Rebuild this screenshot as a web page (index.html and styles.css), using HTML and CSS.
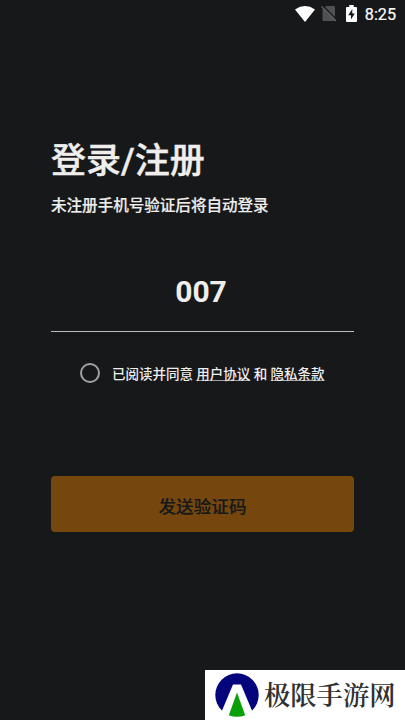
FILE: index.html
```
<!DOCTYPE html>
<html lang="zh-CN">
<head>
<meta charset="utf-8">
<title>登录/注册</title>
<link rel="stylesheet" href="styles.css">
</head>
<body>
<header class="status">
  <svg class="wifi" viewBox="0 0 20 16"><path d="M0 3.4Q10-3.4 20 3.4L10 16Z" fill="#fff"/></svg>
  <svg class="sim" viewBox="0 0 16 17"><path d="M5 1H13Q14 1 14 2V16H2.5Q1.5 16 1.5 15V4.5Z" fill="#505152"/><path d="M1.5 .5 16 15" stroke="#17181a" stroke-width="1.5"/><path d="M.5 1.5 15 16" stroke="#606162" stroke-width="1.2"/></svg>
  <svg class="battery" viewBox="0 0 11 17"><path d="M3.3 0H7.7V2H10Q11 2 11 3V16Q11 17 10 17H1Q0 17 0 16V3Q0 2 1 2H3.3Z" fill="#fff"/><path d="M6.3 4 2.2 10.2H5V14.6L8.8 8.5H6.3Z" fill="#17181a"/></svg>
  <time class="clock">8:25</time>
</header>
<main class="login">
  <h1 class="title">登录/注册</h1>
  <p class="hint">未注册手机号验证后将自动登录</p>
  <div class="phone">007</div>
  <div class="agreement">
    <span class="radio"></span>
    <span class="terms">已阅读并同意 <a class="link">用户协议</a> 和 <a class="link">隐私条款</a></span>
  </div>
  <button class="submit">发送验证码</button>
</main>
<footer class="brand">
  <svg class="logo" viewBox="0 0 44 44"><circle cx="22" cy="22" r="21.7" fill="#04047c"/><path d="M18 11.5H26L38 40V44H6V40Z" fill="#fff"/><path d="M22 19.5 30.2 42.2Q22 45.3 13.8 42.2Z" fill="#08a008"/></svg>
  <span class="brand-name">极限手游网</span>
</footer>
</body>
</html>
```
FILE: styles.css
```
* { box-sizing: border-box; }
body {
  margin: 0;
  height: 720px;
  display: flex;
  flex-direction: column;
  overflow: hidden;
  background: #17181a;
  color: #efeeec;
  font-family: Roboto, "Noto Sans CJK SC", sans-serif;
}
.status {
  height: 28px;
  display: flex;
  justify-content: flex-end;
  align-items: center;
  padding-right: 9px;
}
.wifi { width: 20px; height: 16px; margin-right: 6px; margin-top: -1px; }
.sim { width: 16px; height: 17px; margin-right: 9px; margin-top: -1px; }
.battery { width: 11px; height: 17px; margin-right: 8px; margin-top: -1px; }
.clock { color: #fff; font-size: 16.2px; font-weight: 400; line-height: 29px; -webkit-text-stroke: .2px; }
.login { flex: 1; padding: 109px 51px 0; }
.title { margin: 0; font-size: 35px; line-height: 50px; font-weight: 500; white-space: nowrap; -webkit-text-stroke: .4px; }
.hint { margin: 7px 0 0; font-size: 15.55px; line-height: 24px; font-weight: 500; white-space: nowrap; -webkit-text-stroke: .15px; }
.phone {
  height: 114px;
  padding: 54px 3px 0 0;
  border-bottom: 1.5px solid #bcbcbb;
  font-size: 30px;
  line-height: 40px;
  font-weight: 700;
  text-align: center;
}
.agreement {
  display: flex;
  align-items: center;
  height: 20px;
  margin: 31px 0 0 29px;
  gap: 12px;
  font-size: 13.5px;
  line-height: 20px;
  font-weight: 500;
  white-space: nowrap;
}
.terms { padding-top: 1px; }
.radio { width: 20px; height: 20px; border: 2px solid #a2a2a2; border-radius: 50%; }
.link { text-decoration: underline #a2a2a2 1px; text-underline-offset: 1px; text-decoration-skip-ink: none; }
.submit {
  display: block;
  width: 303px;
  height: 56px;
  margin: 93px 0 0;
  padding: 5px 0 0;
  border: 0;
  border-radius: 4px;
  background: #75470e;
  color: #17181a;
  font: 500 17.6px/24px Roboto, "Noto Sans CJK SC", sans-serif;
  -webkit-text-stroke: .15px;
}
.brand {
  align-self: flex-end;
  width: 200px;
  height: 50px;
  display: flex;
  align-items: center;
  padding-left: 10px;
  gap: 5px;
  background: #fff;
}
.logo { width: 44px; height: 44px; margin-top: -1px; }
.brand-name {
  color: #303030;
  font: 600 26.3px/40px "Noto Serif CJK SC", "Noto Sans CJK SC", serif;
  margin-top: -2px;
  white-space: nowrap;
}
```
